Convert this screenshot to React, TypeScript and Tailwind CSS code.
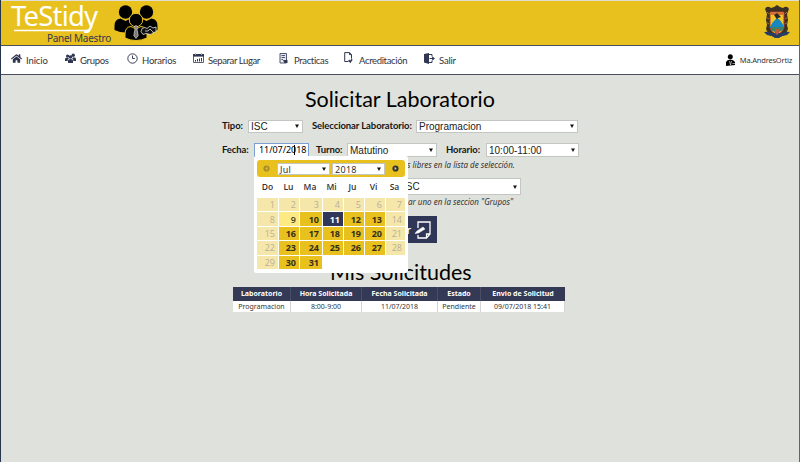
import type { ReactNode } from "react";
import { FaHome } from "react-icons/fa";

const lato = "font-['Lato','Open_Sans',sans-serif]";
const noto = "font-['Noto_Sans','Open_Sans',sans-serif]";

function Select({ label, box, text = "font-['Liberation_Sans',sans-serif] text-[10px]", pad = "pl-[2px]" }: { label: string; box: string; text?: string; pad?: string }) {
  return (
    <div className={`flex shrink-0 items-center justify-between border border-[#c4c6c2] bg-white pr-[3px] text-[#222] ${pad} ${text} ${box}`}>
      <span className="whitespace-nowrap pt-px leading-none">{label}</span>
      <svg width="4" height="4" viewBox="0 0 4 4"><path d="M0 .5h4L2 4z" fill="#111" /></svg>
    </div>
  );
}

function Item({ icon, label, box, tracking }: { icon: ReactNode; label: string; box: string; tracking: string }) {
  return (
    <div className={`flex h-full shrink-0 items-center text-[#2e3350] ${box}`}>
      <span className="mb-[4px] flex w-[15px] shrink-0">{icon}</span>
      <span className={`mt-[2px] whitespace-nowrap text-[9.5px] text-[#33343a] ${lato} ${tracking}`}>{label}</span>
    </div>
  );
}

function GroupIcon() {
  return (
    <svg width="11" height="11" viewBox="0 0 11 11" fill="#303754">
      <circle cx="2.6" cy="3" r="1.6" /><circle cx="8.2" cy="2.2" r="1.7" /><circle cx="5.5" cy="4" r="1.8" />
      <path d="M0 8V6q0-1.5 2-1.5l2 .8Q2.600 6 2.600 8zM7 5.300l2-1q2 0 2 1.700v2H8.400Q8.400 6 7 5.300zM3 10V7.500Q3 6 5.500 6T8 7.500V10z" />
    </svg>
  );
}

function ClockIcon() {
  return <svg width="11" height="11" viewBox="0 0 11 11" fill="none" stroke="#3b415c"><circle cx="5.500" cy="5.500" r="4.700" /><path d="M5.500 2.500v3h2.300" /></svg>;
}

function CalendarIcon() {
  return (
    <svg width="11" height="10" viewBox="0 0 11 10">
      <path d="M.5 1.500h10v8H.5z" fill="#fff" stroke="#5b6077" />
      <path d="M0 1h11v2.600H0z" fill="#303754" />
      <path d="M2.500 0v2m6-2v2" stroke="#aeb1bd" />
      <path d="M2 7h1v1.500H2zM4 6h1v2.500H4zM6 5.500h1v3H6zM8 5h1v3.500H8z" fill="#303754" />
    </svg>
  );
}

function ExitIcon() {
  return (
    <svg width="11" height="11" viewBox="0 0 11 11" fill="#303754">
      <path d="M0 1 5 0v11L0 9.500z" /><path d="M5 1.500h3v2m0 4v2H5" fill="none" stroke="#303754" /><path d="M5.500 5h2.700V3.200L11 5.500 8.200 7.800V6H5.500z" />
    </svg>
  );
}

function PageIcon({ lines = false }: { lines?: boolean }) {
  return lines ? (
    <svg width="9" height="11" viewBox="0 0 9 11" fill="none">
      <path d="M1 .5h6.500v9.500H1z" fill="#e6e8ee" stroke="#515770" />
      <path d="M2.500 2.500h3.500m-3.500 2h3.500m-3.500 2H4" stroke="#515770" /><path d="M4 7h4.500v3H5.500z" fill="#303754" />
    </svg>
  ) : (
    <svg width="9" height="12" viewBox="0 0 9 12" fill="none" stroke="#303754">
      <path d="M4.500 9.500H.7V.6h4.800l2 2v4" /><path d="M5.500.6v2h2" /><path d="m4.800 8 1.500 2 1.800-2.800" strokeWidth="1.500" />
    </svg>
  );
}

function Person({ x, y }: { x: number; y: number }) {
  return (
    <g transform={`translate(${x} ${y})`}>
      <circle cx="0" cy="0" r="6.7" />
      <path d="M-11 18v-4Q-11 7-5 6.500L0 9l5-2.500q6 .5 6 7.500v4q-11 5-22 0z" />
    </g>
  );
}

function TeamLogo() {
  return (
    <svg width="46" height="42" viewBox="0 0 46 42" className="ml-[3px] mt-px shrink-0">
      <Person x={11.5} y={10} />
      <Person x={32.5} y={10} />
      <g stroke="#e8c11f" strokeWidth="1"><Person x={22} y={18} /></g>
      <path d="m20.500 24.500 1.500-1 1.500 1-.6 2 1.300 7-2.200 3-2.200-3 1.300-7z" fill="#777" stroke="#eee" strokeWidth=".6" />
      <path d="M28 26.500q3-2 5 0l3-2.500 3 2 3-1v5l-3 .5-2 2-5-1-3 1-2-3zM31 29h3l2-2 3 3" fill="#111" stroke="#ddd" strokeWidth=".8" />
    </svg>
  );
}

function Crest() {
  return (
    <svg width="26" height="34" viewBox="0 0 26 34" className="mr-[9px] mt-[4px] shrink-0">
      <path d="M1 4q2-4 6-1l3-1 3-2 3 2 3 1q4-3 6 1l-2 5 1 6-1 5 1 4-3 6-8 3-8-3-3-6 1-4-1-5 1-6z" fill="#3a3026" />
      <path d="M3 7l2 2M2 12l3 2M2 17l3 2m18-12-2 2m3 3-3 2m3 3-3 2" stroke="#9b722c" />
      <path d="M6 7h14v15q-1 6-7 7-6-1-7-7z" fill="#f0c629" stroke="#ad392b" />
      <path d="M7 7h12v3H7z" fill="#db7130" />
      <path d="m10 10 3-2 1 1 3 3-3 1-1 2-1-2z" fill="#2d2925" />
      <path d="m6 22 3-5 3-3h3l3 4 2 4v1H6z" fill="#1687c0" />
      <path d="M7 22h12v3l-6 3-6-3z" fill="#3f8060" />
      <path d="M0 27q5-1 7 1h12q2-2 7-1l-3 3-5 1-3 2h-4l-3-2-5-1z" fill="#263d64" />
      <path d="M11 24h4v4l-2 2-2-2z" fill="#b9583b" />
    </svg>
  );
}

const weeks = [
  [1, 2, 3, 4, 5, 6, 7],
  [8, 9, 10, 11, 12, 13, 14],
  [15, 16, 17, 18, 19, 20, 21],
  [22, 23, 24, 25, 26, 27, 28],
  [29, 30, 31],
];

function dayStyle(day: number, column: number) {
  if (day === 11) return "bg-[#303758] font-bold text-white";
  if (day === 9) return "bg-[#fdea85] font-semibold text-[#41391c]";
  if (day < 9 || column === 0 || column === 6) return "bg-[#f5e6a9] font-normal text-[#b9b19a]";
  return "bg-[#e8c11f] font-bold text-[#352e18]";
}

function Arrow({ dim = false }: { dim?: boolean }) {
  return (
    <svg width="7" height="7" viewBox="0 0 7 7" className={dim ? "opacity-35" : ""}>
      <circle cx="3.5" cy="3.5" r="3.1" fill="#30353f" />
      <path d={dim ? "m4.4 1.8-2 1.7 2 1.7z" : "m2.6 1.8 2 1.7-2 1.7z"} fill="#efd45f" />
    </svg>
  );
}

function Calendar() {
  const pick = "font-['Open_Sans',sans-serif] text-[9px] tracking-[0.3px]";
  return (
    <div className="absolute left-[253px] top-[156px] z-10 h-[117px] w-[154px] rounded-[2px] bg-white px-[3px] pt-[4px] font-['Open_Sans',sans-serif]">
      <div className="flex h-[17px] items-center rounded-[3px] bg-[#e8c11f] pl-[6px] pr-[6px]">
        <Arrow dim />
        <Select label="Jul" box="ml-[7px] h-[12px] w-[53px]" text={pick} />
        <Select label="2018" box="ml-[2px] h-[12px] w-[53px]" text={pick} />
        <span className="ml-auto"><Arrow /></span>
      </div>
      <div className="grid h-[20px] grid-cols-[21px_21px_22px_21px_21px_21px_21px] items-center pt-px text-center text-[8.5px] font-semibold text-[#333]">
        {["Do", "Lu", "Ma", "Mi", "Ju", "Vi", "Sa"].map((d) => <span key={d}>{d}</span>)}
      </div>
      <div className="flex flex-col gap-px pt-px">
        {weeks.map((week) => (
          <div key={week[0]} className="grid grid-cols-[21px_20px_22px_20px_20px_20px_19px] gap-px">
            {week.map((day, c) => (
              <div key={day} className={`flex h-[13.4px] items-center justify-end pr-[3px] text-[9px] leading-none ${dayStyle(day, c)}`}>{day}</div>
            ))}
          </div>
        ))}
      </div>
    </div>
  );
}

const label = `shrink-0 whitespace-nowrap text-[9.5px] font-bold tracking-[-0.1px] text-[#161616] ${lato}`;
const columns = "grid grid-cols-[58px_71px_76px_43px_84px]";
const hint = `whitespace-nowrap text-[8px] italic leading-[12px] text-[#333] ${noto}`;

export default function App() {
  return (
    <div className="relative h-[462px] w-[800px] overflow-hidden border-l border-r border-l-[#25364b] border-r-[#3e6f93] bg-[#dfe1dc]">
      <header className="flex h-[45px] items-start border-t border-[#e1dfd4] bg-[#e8c11f]">
        <div className="relative ml-[10px] h-[44px] w-[100px] shrink-0">
          <div className={`-mt-[2px] h-[33px] whitespace-nowrap text-[27.5px] leading-[33px] tracking-[-0.8px] text-white ${noto}`}>TeStidy</div>
          <svg className="absolute left-[3px] top-[24px]" width="84" height="7" viewBox="0 0 84 7"><path d="M0 5.500h72q4 0 6-5" fill="none" stroke="#fff" strokeWidth="1.500" /></svg>
          <div className={`text-right text-[10px] leading-[13px] tracking-[-0.25px] text-[#34374b] ${noto}`}>Panel Maestro</div>
        </div>
        <TeamLogo />
        <div className="ml-auto"><Crest /></div>
      </header>
      <nav className="flex h-[30px] items-center border-y border-[#4b4e61] bg-white pl-[10px]">
        <Item box="w-[54px]" label="Inicio" tracking="tracking-[-0.1px]" icon={<FaHome size={11} />} />
        <Item box="w-[62px]" label="Grupos" tracking="tracking-[-0.3px]" icon={<GroupIcon />} />
        <Item box="w-[66px]" label="Horarios" tracking="tracking-[-0.2px]" icon={<ClockIcon />} />
        <Item box="w-[86px]" label="Separar Lugar" tracking="tracking-[-0.4px]" icon={<CalendarIcon />} />
        <Item box="w-[65px]" label="Practicas" tracking="tracking-[-0.35px]" icon={<PageIcon lines />} />
        <Item box="w-[80px]" label="Acreditación" tracking="tracking-[-0.35px]" icon={<PageIcon />} />
        <Item box="w-[50px]" label="Salir" tracking="tracking-[-0.2px]" icon={<ExitIcon />} />
        <div className={`ml-auto mr-[7px] flex items-center gap-[4px] text-[#333] ${noto}`}>
          <svg width="10" height="12" viewBox="0 0 10 12"><circle cx="4.300" cy="2.700" r="2.500" /><path d="M0 12V8q1-2.500 4.300-2.500T9 8v3z" /><path d="m3.500 7 1 4 1-4m1 2.500h3" stroke="#ddd" fill="none" strokeWidth=".7" /></svg>
          <span className="mt-px whitespace-nowrap text-[7.5px] tracking-[-0.2px]">Ma.AndresOrtiz</span>
        </div>
      </nav>
      <main>
        <h1 className={`mt-[12px] h-[28px] whitespace-nowrap pl-[304px] text-[21.5px] leading-[25px] text-black ${lato}`}>Solicitar Laboratorio</h1>
        <div className="mt-[4px] flex h-[14px] items-center pl-[221px]">
          <span className={`${label} w-[26px]`}>Tipo:</span>
          <Select label="ISC" box="h-[13px] w-[55px]" />
          <span className={`${label} ml-[9px] w-[104px]`}>Seleccionar Laboratorio:</span>
          <Select label="Programacion" box="h-[13px] w-[162px]" />
        </div>
        <div className="mt-[10px] flex h-[14px] items-center pl-[221px]">
          <span className={`${label} w-[32px]`}>Fecha:</span>
          <div className={`relative flex h-[14px] w-[55px] items-center border border-[#7b9fd5] bg-white pl-[4px] text-[9px] tracking-[-0.05px] ${noto}`}>11/07/2018<span className="absolute left-[39px] top-px h-[10px] w-px bg-black" /></div>
          <span className={`${label} ml-[7px] w-[31px]`}>Turno:</span>
          <Select label="Matutino" box="h-[14px] w-[90px]" />
          <span className={`${label} ml-[9px] w-[40px]`}>Horario:</span>
          <Select label="10:00-11:00" box="h-[14px] w-[93px]" />
        </div>
        <p className={`h-[12px] pl-[406px] pt-[2px] ${hint}`}>s libres en la lista de selección.</p>
        <div className="mt-[9px] flex pl-[388px]"><Select label="ISC" box="h-[17px] w-[132px]" pad="pl-[13px]" /></div>
        <p className={`mt-px h-[12px] pl-[407px] ${hint}`}>ar uno en la seccion "Grupos"</p>
        <button className="ml-[349px] mt-[8px] flex h-[27px] w-[87px] items-center justify-end bg-[#303655] pr-[5px] text-white">
          <span className={`mr-[3px] text-[12px] ${lato}`}>r</span>
          <svg width="18" height="18" viewBox="0 0 18 18" fill="none" stroke="#fff" strokeWidth="1.3"><path d="M4 7V1h12v12l-3.500 4H4v-3m8.500 3v-4H16" /><path d="m1 12.500 2-2.500 6-4 2 2-6.500 4z" fill="#fff" strokeWidth=".5" /></svg>
        </button>
        <h2 className={`mt-[17px] h-[27px] whitespace-nowrap pl-[329px] text-[21.5px] leading-[25px] text-black ${lato}`}>Mis Solicitudes</h2>
        <div className={`ml-[232px] w-[332px] text-center text-[7px] ${noto}`}>
          <div className={`${columns} h-[14px] items-center bg-[#343956] font-bold text-white`}>
            {["Laboratorio", "Hora Solicitada", "Fecha Solicitada", "Estado", "Envio de Solicitud"].map((s) => <span key={s} className="whitespace-nowrap border-r border-[#4a4e66] leading-[14px] last:border-0">{s}</span>)}
          </div>
          <div className={`${columns} h-[11px] bg-white text-[#333]`}>
            {["Programacion", "8:00-9:00", "11/07/2018", "Pendiente", "09/07/2018 15:41"].map((s) => <span key={s} className="whitespace-nowrap border-r border-[#d5d5d5] leading-[11px]">{s}</span>)}
          </div>
        </div>
      </main>
      <Calendar />
    </div>
  );
}
